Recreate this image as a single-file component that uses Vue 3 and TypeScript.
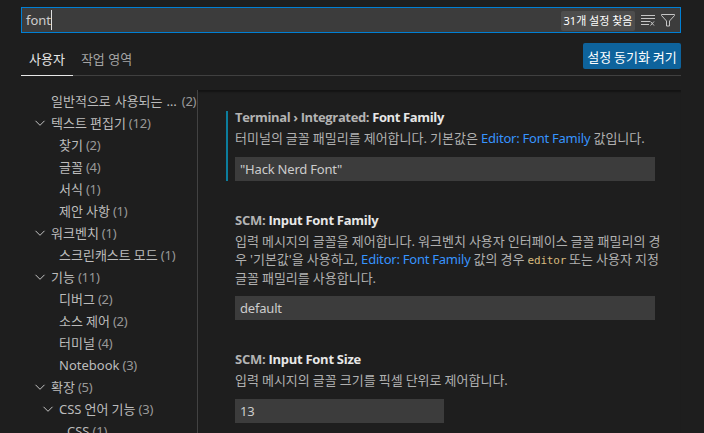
<script setup lang="ts">
interface TreeRow {
  label: string
  count: number
  level: number
  open?: boolean
  truncated?: boolean
}

interface Segment {
  text: string
  kind?: 'link' | 'code'
}

interface Setting {
  id: string
  category: string
  name: string
  lines: Segment[][]
  value: string
  modified?: boolean
  numeric?: boolean
}

const tree: TreeRow[] = [
  { label: '일반적으로 사용되는 …', count: 2, level: 0, truncated: true },
  { label: '텍스트 편집기', count: 12, level: 0, open: true },
  { label: '찾기', count: 2, level: 1 },
  { label: '글꼴', count: 4, level: 1 },
  { label: '서식', count: 1, level: 1 },
  { label: '제안 사항', count: 1, level: 1 },
  { label: '워크벤치', count: 1, level: 0, open: true },
  { label: '스크린캐스트 모드', count: 1, level: 1 },
  { label: '기능', count: 11, level: 0, open: true },
  { label: '디버그', count: 2, level: 1 },
  { label: '소스 제어', count: 2, level: 1 },
  { label: '터미널', count: 4, level: 1 },
  { label: 'Notebook', count: 3, level: 1 },
  { label: '확장', count: 5, level: 0, open: true },
  { label: 'CSS 언어 기능', count: 3, level: 1, open: true },
  { label: 'CSS', count: 1, level: 2 },
]

const settings: Setting[] = [
  {
    id: 'terminal-font',
    category: 'Terminal › Integrated:',
    name: 'Font Family',
    lines: [
      [
        { text: '터미널의 글꼴 패밀리를 제어합니다. 기본값은 ' },
        { text: 'Editor: Font Family', kind: 'link' },
        { text: ' 값입니다.' },
      ],
    ],
    value: '"Hack Nerd Font"',
    modified: true,
  },
  {
    id: 'scm-font',
    category: 'SCM:',
    name: 'Input Font Family',
    lines: [
      [{ text: '입력 메시지의 글꼴을 제어합니다. 워크벤치 사용자 인터페이스 글꼴 패밀리의 경' }],
      [
        { text: "우 '기본값'을 사용하고, " },
        { text: 'Editor: Font Family', kind: 'link' },
        { text: ' 값의 경우 ' },
        { text: 'editor', kind: 'code' },
        { text: ' 또는 사용자 지정' },
      ],
      [{ text: '글꼴 패밀리를 사용합니다.' }],
    ],
    value: 'default',
  },
  {
    id: 'scm-size',
    category: 'SCM:',
    name: 'Input Font Size',
    lines: [[{ text: '입력 메시지의 글꼴 크기를 픽셀 단위로 제어합니다.' }]],
    value: '13',
    numeric: true,
  },
]
</script>

<template>
  <div class="editor">
    <div class="search">
      <span class="query">font</span><span class="caret"></span>
      <span class="badge">31개 설정 찾음</span>
      <svg class="icon clear" width="16" height="16" viewBox="0 0 16 16">
        <path d="M1 3.500h14M1 6.500h14M1 9.500h9M1 12.500h8M10.500 9.500l3.500 4M14 9.500l-3.500 4" />
      </svg>
      <svg class="icon filter" width="16" height="16" viewBox="0 0 16 16">
        <path d="M1.500 2.500h13v1L9.500 9v5h-3V9L1.500 3.500z" />
      </svg>
    </div>

    <div class="header">
      <div class="tab active">사용자</div>
      <div class="tab">작업 영역</div>
      <button class="sync">설정 동기화 켜기</button>
    </div>

    <div class="body">
      <nav class="tree">
        <div
          v-for="(row, i) in tree"
          :key="i"
          class="row"
          :class="['level-' + row.level, { truncated: row.truncated }]"
        >
          <span class="twisty">
            <svg v-if="row.open" width="16" height="16" viewBox="0 0 16 16">
              <path d="M3.500 5.800l4.500 4.500 4.500-4.500" />
            </svg>
          </span>
          <span class="label">{{ row.label }}</span>
          <span class="count">({{ row.count }})</span>
        </div>
      </nav>

      <main class="list">
        <section
          v-for="s in settings"
          :key="s.id"
          class="setting"
          :class="{ modified: s.modified }"
        >
          <h3 class="title"><span class="category">{{ s.category }}</span> <span class="name">{{ s.name }}</span></h3>
          <div class="description">
            <div v-for="(line, n) in s.lines" :key="n" class="line"><span v-for="(seg, k) in line" :key="k" :class="seg.kind">{{ seg.text }}</span></div>
          </div>
          <div class="value" :class="{ numeric: s.numeric }">{{ s.value }}</div>
        </section>
      </main>
    </div>
  </div>
</template>

<style>
body {
  margin: 0;
  overflow: hidden;
  background: #1e1e1e;
}
</style>

<style scoped>
.editor {
  box-sizing: border-box;
  width: 704px;
  height: 433px;
  padding: 7px 23px 0 21px;
  overflow: hidden;
  display: flex;
  flex-direction: column;
  background: #1e1e1e;
  color: #cccccc;
  font-family: "Noto Sans", "Noto Sans CJK KR", sans-serif;
  font-size: 13px;
  white-space: pre;
}

.search {
  box-sizing: border-box;
  flex: none;
  height: 26px;
  display: flex;
  align-items: center;
  padding: 0 4px;
  border: 1px solid #007fd4;
  background: #3c3c3c;
}

.caret {
  width: 1px;
  height: 20px;
  background: #e0e0e0;
}

.badge {
  box-sizing: border-box;
  width: 74px;
  height: 20px;
  margin-left: auto;
  position: relative;
  top: 1px;
  border-radius: 2px;
  background: #4d4d4d;
  color: #ffffff;
  font-size: 11px;
  line-height: 20px;
  text-align: center;
}

.icon {
  fill: none;
  stroke: #c5c5c5;
  stroke-width: 1;
}

.clear {
  margin-left: 5px;
}

.filter {
  margin-left: 4px;
}

.header {
  box-sizing: border-box;
  flex: none;
  height: 43px;
  margin-bottom: 14px;
  display: flex;
  align-items: flex-end;
  border-bottom: 1px solid #404040;
}

.tab {
  box-sizing: border-box;
  height: 33px;
  margin-bottom: -1px;
  padding: 0 8px;
  line-height: 33px;
  color: #a5a5a5;
  border-bottom: 1px solid transparent;
}

.tab.active {
  color: #e7e7e7;
  border-bottom-color: #e7e7e7;
}

.sync {
  width: 98px;
  height: 26px;
  margin: 0 0 6px auto;
  padding: 0;
  border: 0;
  border-radius: 2px;
  background: #0e639c;
  color: #ffffff;
  font: inherit;
  word-spacing: -0.6px;
}

.body {
  flex: 1;
  min-height: 0;
  display: flex;
}

.tree {
  flex: none;
  width: 176px;
  border-right: 1px solid #424242;
  overflow: hidden;
}

.row {
  height: 22px;
  display: flex;
  align-items: center;
  line-height: 22px;
}

.level-0 {
  padding-left: 11px;
}

.level-1 {
  padding-left: 19px;
}

.level-2 {
  padding-left: 27px;
}

.twisty {
  width: 19px;
  height: 16px;
}

.twisty svg {
  display: block;
  fill: none;
  stroke: #c5c5c5;
}

.label {
  color: #bcbcbc;
  word-spacing: -0.3px;
}

.count {
  margin-left: 3px;
  color: #999999;
  letter-spacing: -0.2px;
}

.truncated .label {
  word-spacing: 0.5px;
}

.truncated .count {
  margin-left: 5px;
}

.list {
  flex: 1;
  min-width: 0;
  padding-top: 9px;
  box-shadow: inset 0 3px 2px -1px #141414;
}

.setting {
  position: relative;
  padding: 7px 26px 21px 37px;
}

.modified::before {
  content: "";
  position: absolute;
  left: 28px;
  top: 12px;
  width: 2px;
  height: 70px;
  background: #0c7d9d;
}

.title {
  margin: 0;
  height: 23px;
  line-height: 22px;
  font-family: "Open Sans", sans-serif;
  font-size: 13px;
  font-weight: 700;
  letter-spacing: -0.27px;
}

.modified .title {
  letter-spacing: -0.37px;
}

.category {
  color: #b3b3b3;
}

.name {
  color: #e7e7e7;
}

.description {
  margin-bottom: 9px;
  color: #b0b0b0;
  word-spacing: -0.35px;
}

.line {
  height: 18.6px;
  line-height: 19px;
}

.link {
  color: #3794ff;
  letter-spacing: -0.18px;
}

.code {
  color: #d7ba7d;
  font-family: "DejaVu Sans Mono", monospace;
  font-size: 11px;
  letter-spacing: -0.2px;
}

.value {
  box-sizing: border-box;
  height: 24px;
  padding-left: 5px;
  line-height: 24px;
  letter-spacing: -0.2px;
  background: #3c3c3c;
}

.numeric {
  width: 209px;
}
</style>
